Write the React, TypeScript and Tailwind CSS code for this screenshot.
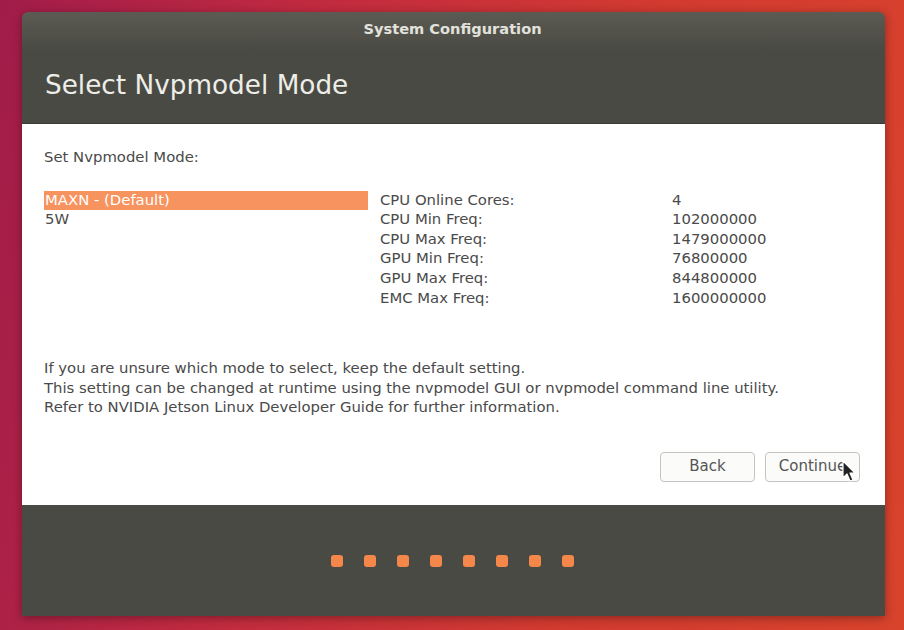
const modes = ["MAXN - (Default)", "5W"];

const specs: [string, string][] = [
  ["CPU Online Cores:", "4"],
  ["CPU Min Freq:", "102000000"],
  ["CPU Max Freq:", "1479000000"],
  ["GPU Min Freq:", "76800000"],
  ["GPU Max Freq:", "844800000"],
  ["EMC Max Freq:", "1600000000"],
];

const Cursor = () => (
  <svg width="16" height="24" viewBox="0 0 16 24" className="absolute left-[842px] top-[460px]">
    <path d="M1 1 L1 18 L5 14 L8 21 L11 20 L8 13 L13 13 Z" fill="#222" stroke="#fff" strokeWidth="1.2" strokeLinejoin="round" />
  </svg>
);

const App = () => {
  return (
    <div className="relative w-[904px] h-[630px] overflow-hidden bg-[linear-gradient(100deg,#a11c4a_0%,#c02a40_30%,#d23a30_65%,#d8432c_100%)] pl-[22px] pt-[12px] font-['DejaVu_Sans',sans-serif]">
      <div className="flex flex-col w-[863px] h-[604px] rounded-t-[6px] overflow-hidden shadow-[0_2px_10px_rgba(0,0,0,0.35)]">
        {/* header */}
        <div className="h-[112px] bg-[linear-gradient(#5b5b53,#4a4a44_35%,#4a4a44)] border-b border-[#3a3a36]">
          <div className="pt-[8px] pr-[2px] text-center text-[14.6px] font-bold text-[#e2e2dc] leading-[18px]">
            System Configuration
          </div>
          <div className="mt-[32px] pl-[23px] text-[26.3px] text-[#eeeee8] leading-[30px]">
            Select Nvpmodel Mode
          </div>
        </div>

        {/* content */}
        <div className="flex flex-col h-[381px] bg-white px-[22px] text-[14.85px] text-[#4a4a4a] leading-[19.6px]">
          <div className="mt-[24px]">Set Nvpmodel Mode:</div>
          <div className="flex mt-[23px]">
            <div className="w-[324px]">
              {modes.map((m, i) => (
                <div key={m} className={i === 0 ? "bg-[#f7935e] text-white pl-[1px]" : "pl-[1px]"}>
                  {m}
                </div>
              ))}
            </div>
            <div className="ml-[12px]">
              {specs.map(([k, v]) => (
                <div key={k} className="flex">
                  <div className="w-[292px]">{k}</div>
                  <div>{v}</div>
                </div>
              ))}
            </div>
          </div>
          <div className="mt-[51px]">
            <div>If you are unsure which mode to select, keep the default setting.</div>
            <div>This setting can be changed at runtime using the nvpmodel GUI or nvpmodel command line utility.</div>
            <div>Refer to NVIDIA Jetson Linux Developer Guide for further information.</div>
          </div>
          <div className="flex justify-end gap-[10px] mt-[34px] mr-[3px]">
            <button className="w-[95px] h-[30px] rounded-[4px] border border-[#c4c4c0] bg-[#fbfbfa] text-[15px] text-[#555]">
              Back
            </button>
            <button className="w-[95px] h-[30px] rounded-[4px] border border-[#c4c4c0] bg-[#fbfbfa] text-[15px] text-[#555]">
              Continue
            </button>
          </div>
        </div>

        {/* footer with progress dots */}
        <div className="flex-1 flex items-center justify-center gap-[20.5px] bg-[#4a4a44] pt-[1px] pr-[2px]">
          {Array.from({ length: 8 }).map((_, i) => (
            <div key={i} className="w-[12.5px] h-[12.5px] rounded-[3px] bg-[#f5874a]" />
          ))}
        </div>
      </div>
      <Cursor />
    </div>
  );
};

export default App;
